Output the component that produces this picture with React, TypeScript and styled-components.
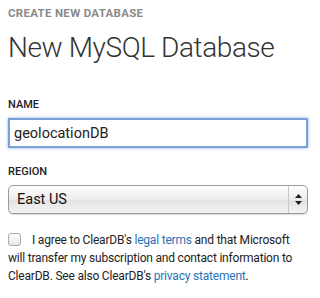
import React from "react";
import styled, { createGlobalStyle } from "styled-components";

const Global = createGlobalStyle`
  html, body { margin: 0; padding: 0; background: #fff; }
  body { font-family: "Roboto", "Open Sans", sans-serif; color: #222; }
`;

const Page = styled.div`
  width: 320px;
  height: 298px;
  box-sizing: border-box;
  padding: 6px 12px 0 8px;
  display: flex;
  flex-direction: column;
`;

const Eyebrow = styled.div`
  font-size: 11.5px;
  font-weight: 700;
  color: #8a8a8a;
  letter-spacing: 0.3px;
  line-height: 14px;
`;

const Title = styled.h1`
  margin: 11px 0 0 0;
  font-size: 28px;
  font-weight: 300;
  color: #333;
  letter-spacing: -0.4px;
  line-height: 34px;
`;

const Field = styled.div<{ $top: number }>`
  margin-top: ${(p) => p.$top}px;
  display: flex;
  flex-direction: column;
  gap: 6px;
`;

const Label = styled.label`
  font-size: 11px;
  font-weight: 500;
  color: #222;
  line-height: 14px;
`;

const Input = styled.input`
  box-sizing: border-box;
  width: 300px;
  height: 30px;
  border: 2px solid #7aa0d8;
  box-shadow: 0 0 3px rgba(90, 140, 220, 0.7);
  padding: 0 4px;
  font-family: inherit;
  font-size: 14.5px;
  color: #222;
  outline: none;
`;

const Select = styled.div`
  box-sizing: border-box;
  width: 300px;
  height: 29px;
  border: 1px solid #9a9a9a;
  border-radius: 5px;
  background: linear-gradient(#ffffff, #ececec 50%, #e2e2e2 51%, #f4f4f4);
  display: flex;
  align-items: center;
  box-shadow: 0 1px 1px rgba(0,0,0,0.15);
`;

const SelectText = styled.span`
  flex: 1;
  padding-left: 8px;
  font-size: 14.5px;
  color: #111;
`;

const Arrows = styled.span`
  width: 18px;
  align-self: stretch;
  border-left: 1px solid #c8c8c8;
  display: flex;
  align-items: center;
  justify-content: center;
`;

const Agree = styled.p`
  margin: 17px 0 0 0;
  font-size: 12px;
  letter-spacing: -0.2px;
  line-height: 18px;
  color: #222;
`;

const Check = styled.span`
  display: inline-block;
  width: 11px;
  height: 11px;
  border: 1px solid #aaa;
  border-radius: 3px;
  background: linear-gradient(#fff, #e8e8e8);
  vertical-align: -2px;
  margin-right: 11px;
`;

const Link = styled.a`
  color: #2a72b5;
  text-decoration: none;
`;

export default function App() {
  return (
    <>
      <Global />
      <Page>
        <Eyebrow>CREATE NEW DATABASE</Eyebrow>
        <Title>New MySQL Database</Title>
        <Field $top={33}>
          <Label>NAME</Label>
          <Input defaultValue="geolocationDB" />
        </Field>
        <Field $top={17}>
          <Label>REGION</Label>
          <Select>
            <SelectText>East US</SelectText>
            <Arrows>
              <svg width="7" height="11" viewBox="0 0 7 11">
                <path d="M3.5 0 L7 4 H0 Z M0 7 H7 L3.5 11 Z" fill="#222" />
              </svg>
            </Arrows>
          </Select>
        </Field>
        <Agree>
          <Check />I agree to ClearDB's <Link>legal terms</Link> and that Microsoft
          will transfer my subscription and contact information to ClearDB. See also
          ClearDB's <Link>privacy statement</Link>.
        </Agree>
      </Page>
    </>
  );
}
